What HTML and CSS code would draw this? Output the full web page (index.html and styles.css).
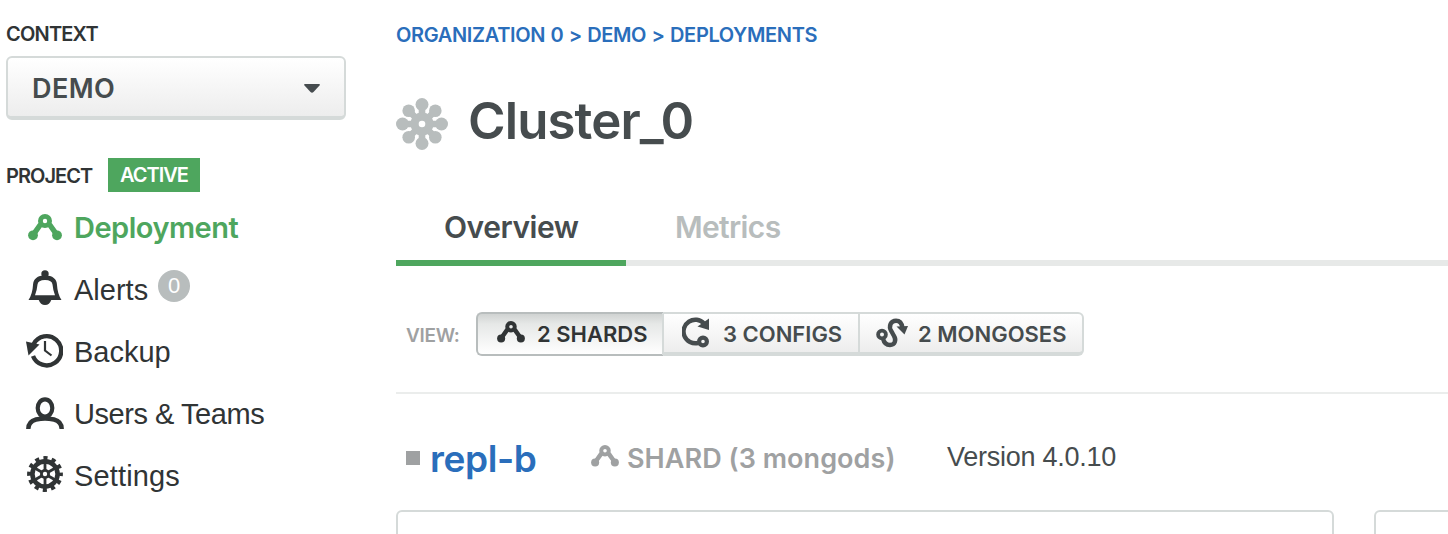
FILE: index.html
```html
<!DOCTYPE html>
<html lang="en">
<head>
<meta charset="utf-8">
<title>Cluster_0</title>
<link rel="stylesheet" href="styles.css">
</head>
<body>
<svg width="0" height="0" class="defs" aria-hidden="true">
  <symbol id="shard" viewBox="0 0 34 28">
    <path d="M12.500 10.500 5 21M21.500 10.500l7.500 10.500" fill="none" stroke="currentColor" stroke-width="5.400"/>
    <circle cx="17" cy="7" r="4.600" fill="none" stroke="currentColor" stroke-width="4.800"/>
    <circle cx="5" cy="21.300" r="4.900" fill="currentColor"/>
    <circle cx="29" cy="21.300" r="4.900" fill="currentColor"/>
  </symbol>
</svg>
<div class="app">
  <aside class="sidebar">
    <div class="label context"><span>CONTEXT</span></div>
    <div class="select"><span>DEMO</span>
      <svg width="16" height="9" viewBox="0 0 16 9"><path d="M1 0h14q1.500 0 .5 1.500L9.500 8q-1.500 1.500-3 0L.5 1.500Q-.5 0 1 0z" fill="#464c4f"/></svg>
    </div>
    <div class="project"><span class="label">PROJECT</span><span class="active">ACTIVE</span></div>
    <nav class="nav">
      <a class="item current"><svg class="ic" width="34" height="28"><use href="#shard"/></svg><span>Deployment</span></a>
      <a class="item"><svg class="ic bell" width="34" height="36" viewBox="0 0 34 36">
        <path d="M.500 30Q4.500 24 5 15Q5.500 5.500 17 5.500T29 15Q29.500 24 33.500 30Z" fill="currentColor"/><circle cx="17" cy="4" r="3.700" fill="currentColor"/>
        <path d="M10.500 29.500q2 5.500 6.500 5.500t6.500-5.500z" fill="currentColor"/><path d="M7 25.300Q9 20 9.500 14.500Q10 10 17 10T24.500 14.500Q25 20 27 25.300Z" fill="#fff"/></svg><span>Alerts</span><span class="badge">0</span></a>
      <a class="item"><svg class="ic back" width="37" height="36" viewBox="0 0 37 36">
        <path d="M7.700 12A14.600 14.600 0 1 1 7 24" fill="none" stroke="currentColor" stroke-width="4.400"/>
        <path d="M0 9.500 13.500 12.500 2.500 23.500z" fill="currentColor"/><path d="M19 9v9.500l6.500 5" fill="none" stroke="currentColor" stroke-width="2.200"/></svg><span>Backup</span></a>
      <a class="item teams"><svg class="ic user" width="38" height="32" viewBox="0 0 38 32">
        <ellipse cx="19" cy="11" rx="7.300" ry="8.700" fill="none" stroke="currentColor" stroke-width="4.200"/>
        <path d="M2.300 32Q2.300 24.500 10 22.500Q15 21.500 19 21.500T28 22.500Q35.700 24.500 35.700 32" fill="none" stroke="currentColor" stroke-width="4.400"/></svg><span>Users &amp; Teams</span></a>
      <a class="item settings"><svg class="ic gear" width="36" height="36" viewBox="-18 -18 36 36">
        <circle r="15.800" fill="none" stroke="currentColor" stroke-width="4.200" stroke-dasharray="4.136 4.136" stroke-dashoffset="2.068"/>
        <circle r="12.600" fill="none" stroke="currentColor" stroke-width="4.600"/>
        <path d="M0-12V12M-10.400-6 10.400 6M-10.400 6 10.400-6" stroke="currentColor" stroke-width="2.800"/>
        <circle r="5" fill="currentColor"/><circle r="2.200" fill="#fff"/></svg><span>Settings</span></a>
    </nav>
  </aside>
  <main class="main">
    <div class="crumbs">ORGANIZATION 0 &gt; DEMO &gt; DEPLOYMENTS</div>
    <div class="title"><svg width="52" height="52" viewBox="-26 -26 52 52">
      <g stroke="#b8bdbd" stroke-width="6.600"><path d="M0-19V19M-19 0H19M-13.500-13.500 13.500 13.500M13.500-13.500-13.500 13.500"/></g>
      <g fill="#b8bdbd"><circle r="11.500"/><circle cy="-19.500" r="6.500"/><circle cy="19.500" r="6.500"/><circle cx="-19.500" r="6.500"/><circle cx="19.500" r="6.500"/><circle cx="-13.300" cy="-13.300" r="6.300"/><circle cx="13.300" cy="-13.300" r="6.300"/><circle cx="-13.300" cy="13.300" r="6.300"/><circle cx="13.300" cy="13.300" r="6.300"/></g>
      <circle r="3.300" fill="#fff"/></svg><h1>Cluster_0</h1></div>
    <div class="tabs"><a class="tab on">Overview</a><a class="tab">Metrics</a></div>
    <div class="view"><span class="viewlabel">VIEW:</span>
      <div class="group">
        <button class="seg s1"><svg width="28" height="23"><use href="#shard"/></svg><span>2 SHARDS</span></button>
        <button class="seg s2"><svg width="28" height="31" viewBox="0 0 28 31"><path d="M22 6.500A11.800 11.800 0 1 0 16 26" fill="none" stroke="currentColor" stroke-width="4.400"/><path d="M27 1.500V13L15.500 9.500z" fill="currentColor"/><circle cx="21" cy="24.500" r="3.900" fill="none" stroke="currentColor" stroke-width="4.200"/></svg><span>3 CONFIGS</span></button>
        <button class="seg s3"><svg width="32" height="30" viewBox="0 0 32 30"><circle cx="6" cy="16.500" r="3.900" fill="none" stroke="currentColor" stroke-width="3.800"/><path d="M7 20.500C8 25 11 27 14 27C19 27 20.500 22 18 18L15.500 13.500C12 8 15 2.700 20 2.700C24.500 2.700 26 6 26.500 10" fill="none" stroke="currentColor" stroke-width="4.400"/><path d="M20.500 8.500 32 8 28.500 16.500z" fill="currentColor"/></svg><span>2 MONGOSES</span></button>
      </div>
    </div>
    <div class="replica">
      <span class="dot"></span><a class="repl">repl-b</a>
      <svg class="ic3" width="28" height="23"><use href="#shard"/></svg><span class="shard">SHARD (3 mongods)</span><span class="version">Version 4.0.10</span>
    </div>
    <div class="cards"><div class="card"></div><div class="card"></div></div>
  </main>
</div>
</body>
</html>
```
FILE: styles.css
```css
* { box-sizing: border-box; }
body { margin: 0; background: #fff; color: #303435; font-family: Inter, "Liberation Sans", sans-serif; font-weight: 600; overflow: hidden; }
.defs { display: none; }
.app { display: flex; width: 1448px; height: 534px; overflow: hidden; }
.sidebar { width: 396px; flex: none; padding-left: 6px; }
.label { font-size: 20px; line-height: 24px; letter-spacing: -.8px; }
.context { padding-top: 22px; height: 56px; }
.select { width: 340px; height: 64px; display: flex; align-items: center; justify-content: space-between; padding: 3px 24px 0; border: 2px solid #d5dad9; border-bottom-width: 4px; border-radius: 6px; background: linear-gradient(#fff, #ededed); font-size: 27px; color: #464c4e; line-height: 32px; letter-spacing: .4px; }
.project { display: flex; align-items: center; height: 34px; margin-top: 38px; }
.project .label { letter-spacing: -.95px; padding-top: 1px; }
.active { margin-left: auto; margin-right: 196px; width: 92px; height: 34px; background: #4ea65e; color: #fff; font-size: 20px; line-height: 35px; padding-left: 12px; letter-spacing: -1px; }
.nav { margin-top: 5px; }
.item { display: flex; align-items: center; height: 62px; padding-left: 22px; font: 400 29px/36px "Liberation Sans", sans-serif; }
.item .ic { flex: none; margin-right: 12px; }
.current { color: #4ea65e; font-family: Inter, sans-serif; font-weight: 600; letter-spacing: -.5px; }
.item .bell { margin-bottom: 4px; }
.item .back { margin: 0 11px 4px -2px; }
.item .user { margin: 0 10px 3px -2px; }
.item .gear { margin: 0 11px 4px -1px; }
.teams { letter-spacing: -.45px; }
.settings { letter-spacing: .15px; }
.badge { width: 32px; height: 32px; border-radius: 50%; background: #b8bdbd; color: #fff; font-size: 22px; line-height: 32px; text-align: center; margin: 0 0 8px 10px; }
.main { flex: 1; min-width: 0; }
.crumbs { height: 70px; line-height: 71px; font-size: 20px; color: #2a6ebb; letter-spacing: -.35px; word-spacing: .7px; }
.title { height: 106px; display: flex; align-items: center; color: #464c4e; gap: 20px; padding-top: 2px; }
.title h1 { margin: 0; font-size: 51px; line-height: 60px; font-weight: 600; letter-spacing: -.9px; padding-bottom: 7px; }
.tabs { height: 90px; display: flex; border-bottom: 6px solid #e7e9e8; font-size: 30px; line-height: 36px; letter-spacing: -.45px; }
.tab { padding: 33px 48px 0; height: 90px; color: #b8bdbd; }
.tab + .tab { padding-left: 49px; letter-spacing: -.65px; }
.on { width: 230px; color: #464c4e; border-bottom: 6px solid #4ea65e; }
.view { height: 128px; display: flex; align-items: center; border-bottom: 2px solid #ebedec; padding: 10px 0 0 10px; }
.viewlabel { width: 70px; font-size: 19px; color: #9fa1a2; letter-spacing: -.3px; padding-top: 2px; }
.group { display: flex; height: 44px; }
.seg { font: 600 22px/26px Inter, sans-serif; color: #464c4e; display: flex; align-items: center; border: 2px solid #d5dad9; border-bottom-width: 4px; border-left-width: 0; background: linear-gradient(#fff, #ededed); padding: 0; white-space: nowrap; height: 44px; }
.seg span { padding-top: 2px; }
.seg svg { margin-bottom: 1px; }
.s1 { width: 188px; border: 2px solid #b8bdbd; border-right-color: #d5dad9; border-radius: 6px 0 0 6px; padding-left: 19px; gap: 12px; color: #303435; background: linear-gradient(#d0d3d2, #e6e8e7 25%, #fff); }
.seg.s1 svg { margin-bottom: 4px; }
.seg.s1 span { padding-top: 0; }
.s2 { width: 196px; padding-left: 18px; gap: 13px; }
.s3 { width: 224px; padding-left: 16px; gap: 10px; border-radius: 0 6px 6px 0; }
.replica { height: 116px; padding: 13px 0 0 10px; display: flex; align-items: center; }
.dot { width: 14px; height: 14px; background: #9fa1a2; margin: 0 10px 2px 0; }
.repl { font-size: 37px; color: #2a6ebb; width: 161px; letter-spacing: -.4px; }
.ic3, .shard { color: #9fa1a2; }
.ic3 { margin-bottom: 4px; }
.shard { font-size: 27px; margin-left: 8px; width: 320px; letter-spacing: .05px; }
.version { font: 400 27px/32px "Liberation Sans", sans-serif; color: #464c4e; letter-spacing: -.25px; padding-bottom: 4px; }
.cards { display: flex; gap: 40px; }
.card { flex: none; width: 938px; height: 100px; border: 2px solid #d5dad9; border-radius: 6px; }
```
